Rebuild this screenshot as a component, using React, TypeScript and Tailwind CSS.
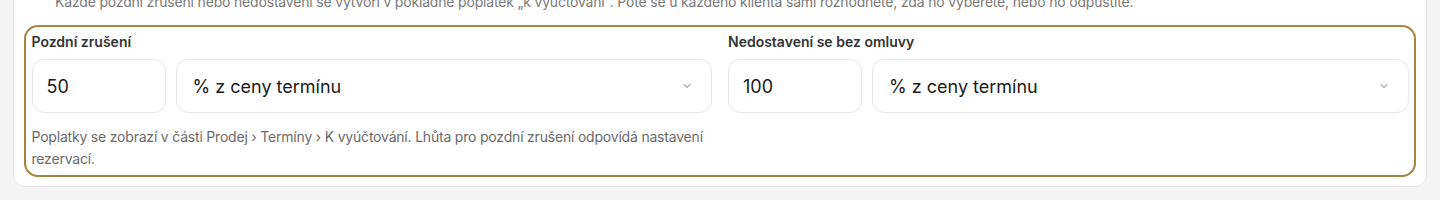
import React, { useState } from 'react';

function ChevronDown() {
  return (
    <svg width="12" height="12" viewBox="0 0 24 24" fill="none" stroke="#6b6b6b" strokeWidth="2" strokeLinecap="round" strokeLinejoin="round">
      <path d="m6 9 6 6 6-6" />
    </svg>
  );
}

function FeeField({ label, value }: { label: string; value: string }) {
  const [amount, setAmount] = useState(value);
  return (
    <div className="flex flex-col">
      <label className="mb-[7px] text-[14px] font-semibold leading-5 text-[#333]">{label}</label>
      <div className="flex gap-2.5">
        <input
          value={amount}
          onChange={e => setAmount(e.target.value)}
          className="h-[54px] w-[134px] rounded-xl border border-[#e8e8e8] bg-white px-[14px] text-[18px] text-[#1a1a1a] outline-none"
        />
        <button className="flex h-[54px] flex-1 items-center justify-between rounded-xl border border-[#e8e8e8] bg-white pl-[16px] pr-[18px] text-[18px] text-[#1a1a1a]">
          <span>% z ceny termínu</span>
          <ChevronDown />
        </button>
      </div>
    </div>
  );
}

export default function App() {
  return (
    <div className="h-[200px] overflow-hidden bg-[#f5f5f5] pl-[13px] pr-[13px]" style={{ fontFamily: 'Inter, "Noto Sans", sans-serif' }}>
      <div className="-mt-[21px] rounded-xl border border-[#e6e6e6] bg-white px-[10px] pb-[9px] pt-[11px]">
        <p className="pl-[31px] text-[14px] leading-[22px] tracking-[-0.18px] text-[#7a7a7a]">
          Každé pozdní zrušení nebo nedostavení se vytvoří v pokladně poplatek „k vyúčtování". Poté se u každého klienta sami rozhodnete, zda ho vyberete, nebo ho odpustíte.
        </p>
        <div className="mt-[12px] rounded-[14px] border-[2.5px] border-[#a7843e] px-[5.5px] pb-[5px] pt-[5px]">
          <div className="grid grid-cols-2 gap-4">
            <div>
              <FeeField label="Pozdní zrušení" value="50" />
              <p className="mt-[13px] text-[14px] leading-[22px] tracking-[-0.2px] text-[#6b6b6b]">
                Poplatky se zobrazí v části Prodej › Termíny › K vyúčtování. Lhůta pro pozdní zrušení odpovídá nastavení rezervací.
              </p>
            </div>
            <div>
              <FeeField label="Nedostavení se bez omluvy" value="100" />
            </div>
          </div>
        </div>
      </div>
    </div>
  );
}
